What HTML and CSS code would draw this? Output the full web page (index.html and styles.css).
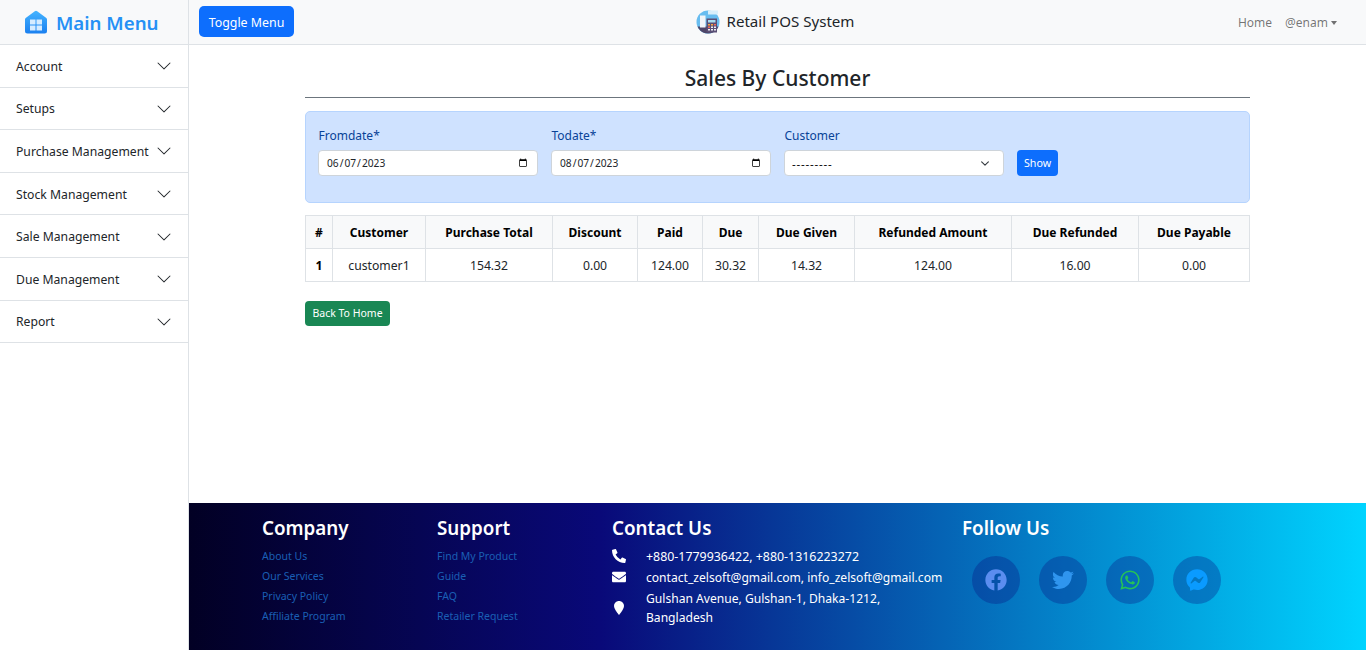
FILE: index.html
```html
<!DOCTYPE html>
<html>
<head>
    <title>Retail POS System</title>
    <meta http-equiv="content-type" content="text/html; charset=UTF-8"/>
    <link rel="stylesheet" href="styles.css">
</head>
<body>
<div class="shell">
    <aside class="sidebar">
        <div class="brand">
            <svg class="brand-icon" viewBox="0 0 24 24">
                <defs>
                    <linearGradient id="houseFill" x1="0" y1="0" x2="0" y2="1">
                        <stop offset="0" stop-color="#45b4ff"/>
                        <stop offset="1" stop-color="#1a80f0"/>
                    </linearGradient>
                </defs>
                <path fill="url(#houseFill)" d="M10.800 1.200a2 2 0 0 1 2.400 0l8.800 6.600a2 2 0 0 1 1 1.700V21a2.500 2.500 0 0 1-2.500 2.500H3.500A2.500 2.500 0 0 1 1 21V9.500a2 2 0 0 1 1-1.700z"/>
                <path fill="#d6ecff" d="M6 9.500h5.500v5H6zM12.500 9.500H18v5h-5.500zM6 15.500h5.500v5H6zM12.500 15.500H18v5h-5.500z"/>
            </svg>
            <span>Main Menu</span>
        </div>
        <ul class="menu">
            <li><span>Account</span><svg viewBox="0 0 16 16"><path d="M1.646 4.646a.5.5 0 0 1 .708 0L8 10.293l5.646-5.647a.5.5 0 0 1 .708.708l-6 6a.5.5 0 0 1-.708 0l-6-6a.5.5 0 0 1 0-.708z"/></svg></li>
            <li><span>Setups</span><svg viewBox="0 0 16 16"><path d="M1.646 4.646a.5.5 0 0 1 .708 0L8 10.293l5.646-5.647a.5.5 0 0 1 .708.708l-6 6a.5.5 0 0 1-.708 0l-6-6a.5.5 0 0 1 0-.708z"/></svg></li>
            <li><span>Purchase Management</span><svg viewBox="0 0 16 16"><path d="M1.646 4.646a.5.5 0 0 1 .708 0L8 10.293l5.646-5.647a.5.5 0 0 1 .708.708l-6 6a.5.5 0 0 1-.708 0l-6-6a.5.5 0 0 1 0-.708z"/></svg></li>
            <li><span>Stock Management</span><svg viewBox="0 0 16 16"><path d="M1.646 4.646a.5.5 0 0 1 .708 0L8 10.293l5.646-5.647a.5.5 0 0 1 .708.708l-6 6a.5.5 0 0 1-.708 0l-6-6a.5.5 0 0 1 0-.708z"/></svg></li>
            <li><span>Sale Management</span><svg viewBox="0 0 16 16"><path d="M1.646 4.646a.5.5 0 0 1 .708 0L8 10.293l5.646-5.647a.5.5 0 0 1 .708.708l-6 6a.5.5 0 0 1-.708 0l-6-6a.5.5 0 0 1 0-.708z"/></svg></li>
            <li><span>Due Management</span><svg viewBox="0 0 16 16"><path d="M1.646 4.646a.5.5 0 0 1 .708 0L8 10.293l5.646-5.647a.5.5 0 0 1 .708.708l-6 6a.5.5 0 0 1-.708 0l-6-6a.5.5 0 0 1 0-.708z"/></svg></li>
            <li><span>Report</span><svg viewBox="0 0 16 16"><path d="M1.646 4.646a.5.5 0 0 1 .708 0L8 10.293l5.646-5.647a.5.5 0 0 1 .708.708l-6 6a.5.5 0 0 1-.708 0l-6-6a.5.5 0 0 1 0-.708z"/></svg></li>
        </ul>
    </aside>

    <div class="main">
        <nav class="topbar">
            <button class="btn btn-toggle">Toggle Menu</button>
            <div class="app-title">
                <svg class="app-logo" viewBox="0 0 24 24">
                    <circle cx="12" cy="12" r="11.500" fill="#68bdf0"/>
                    <path fill="#d9effb" d="M12 .5h10v4H12z"/>
                    <path fill="#4e4668" d="M1.500 16.500h21a11.500 11.500 0 0 1-2.500 3.700A11.500 11.500 0 0 1 4 20.200a11.500 11.500 0 0 1-2.500-3.700z"/>
                    <path fill="#f2f5f8" d="M4 5.500h5.500v12H4z"/>
                    <path fill="#5a4f75" d="M10.500 8.500H21v14h-9a3 3 0 0 1-1.500-1z"/>
                    <path fill="#a8dcef" d="M12 10h7.500v2.500H12z"/>
                    <path fill="#f2a93e" d="M12 14h2v1.500h-2zM15 14h2v1.500h-2z"/>
                    <path fill="#ee6b5c" d="M18 14h2v1.500h-2zM12 16.500h2V18h-2z"/>
                    <path fill="#eef0f2" d="M15 16.500h2V18h-2zM18 16.500h2V18h-2zM12 19h2v1.500h-2zM15 19h2v1.500h-2zM18 19h2v1.500h-2z"/>
                </svg>
                <span>Retail POS System</span>
            </div>
            <div class="top-links">
                <a>Home</a>
                <a class="dropdown">@enam</a>
            </div>
        </nav>

        <main class="content">
            <h3 class="page-title">Sales By Customer</h3>

            <form class="filter-box">
                <label class="field">
                    <span>Fromdate*</span>
                    <input type="date" value="2023-06-07">
                </label>
                <label class="field">
                    <span>Todate*</span>
                    <input type="date" value="2023-08-07">
                </label>
                <label class="field">
                    <span>Customer</span>
                    <select>
                        <option>---------</option>
                    </select>
                </label>
                <button type="button" class="btn btn-show">Show</button>
            </form>

            <table class="report">
                <colgroup>
                    <col class="c-num"><col class="c-name"><col class="c-total"><col class="c-disc"><col class="c-paid"><col class="c-due"><col class="c-given"><col class="c-refund"><col class="c-total"><col class="c-pay">
                </colgroup>
                <thead>
                    <tr>
                        <th>#</th>
                        <th>Customer</th>
                        <th>Purchase Total</th>
                        <th>Discount</th>
                        <th>Paid</th>
                        <th>Due</th>
                        <th>Due Given</th>
                        <th>Refunded Amount</th>
                        <th>Due Refunded</th>
                        <th>Due Payable</th>
                    </tr>
                </thead>
                <tbody>
                    <tr>
                        <th>1</th>
                        <td>customer1</td>
                        <td>154.32</td>
                        <td>0.00</td>
                        <td>124.00</td>
                        <td>30.32</td>
                        <td>14.32</td>
                        <td>124.00</td>
                        <td>16.00</td>
                        <td>0.00</td>
                    </tr>
                </tbody>
            </table>

            <a class="btn btn-back">Back To Home</a>
        </main>

        <footer class="footer">
            <div class="foot-col">
                <h4>Company</h4>
                <a>About Us</a>
                <a>Our Services</a>
                <a>Privacy Policy</a>
                <a>Affiliate Program</a>
            </div>
            <div class="foot-col">
                <h4>Support</h4>
                <a>Find My Product</a>
                <a>Guide</a>
                <a>FAQ</a>
                <a>Retailer Request</a>
            </div>
            <div class="foot-col">
                <h4>Contact Us</h4>
                <div class="contact-row contact-phone">
                    <svg viewBox="0 0 512 512"><path d="M18.900 24.600l104-24a24.200 24.200 0 0 1 27.500 14l48 112a24 24 0 0 1-6.900 28l-60.600 49.600a370.700 370.700 0 0 0 177.200 177.200l49.600-60.600a24 24 0 0 1 28-6.900l112 48a24.300 24.300 0 0 1 14 27.600l-24 104A24 24 0 0 1 464 512C207.900 512 0 304.500 0 48a24 24 0 0 1 18.900-23.400z"/></svg>
                    <span>+880-1779936422, +880-1316223272</span>
                </div>
                <div class="contact-row">
                    <svg viewBox="0 0 512 512"><path d="M502.300 190.800c3.900-3.100 9.700-.2 9.700 4.700V400c0 26.500-21.500 48-48 48H48c-26.500 0-48-21.500-48-48V195.600c0-5 5.700-7.800 9.700-4.700 22.400 17.400 52.100 39.500 154.100 113.600 21.100 15.400 56.700 47.800 92.200 47.600 35.700.3 72-32.800 92.300-47.600 102-74.100 131.600-96.300 154-113.700zM256 320c23.200.4 56.600-29.200 73.400-41.400 132.700-96.300 142.800-104.700 173.400-128.700 5.800-4.500 9.200-11.500 9.200-18.900v-19c0-26.500-21.500-48-48-48H48C21.500 64 0 85.500 0 112v19c0 7.400 3.400 14.300 9.200 18.900 30.600 23.900 40.700 32.400 173.400 128.700 16.800 12.200 50.200 41.800 73.400 41.400z"/></svg>
                    <span>contact_zelsoft@gmail.com, info_zelsoft@gmail.com</span>
                </div>
                <div class="contact-row contact-tall">
                    <svg viewBox="0 0 512 512"><path d="M256 0C155 0 73 82 73 183c0 120 183 329 183 329s183-209 183-329C439 82 357 0 256 0z"/></svg>
                    <span>Gulshan Avenue, Gulshan-1, Dhaka-1212, Bangladesh</span>
                </div>
            </div>
            <div class="foot-col">
                <h4>Follow Us</h4>
                <div class="socials">
                    <a class="social"><svg viewBox="0 0 512 512"><path fill="#5b8def" d="M504 256C504 119 393 8 256 8S8 119 8 256c0 123.780 90.690 226.380 209.250 245V327.690h-63V256h63v-54.640c0-62.150 37-96.480 93.670-96.480 27.140 0 55.520 4.840 55.520 4.840v61h-31.280c-30.800 0-40.410 19.120-40.410 38.730V256h68.780l-11 71.690h-57.780V501C413.310 482.380 504 379.780 504 256z"/></svg></a>
                    <a class="social"><svg viewBox="0 0 512 512"><path fill="#2f95ee" d="M459.370 151.716c.325 4.548.325 9.097.325 13.645 0 138.720-105.583 298.558-298.558 298.558-59.452 0-114.680-17.219-161.137-47.106 8.447.974 16.568 1.299 25.340 1.299 49.055 0 94.213-16.568 130.274-44.832-46.132-.975-84.792-31.188-98.112-72.772 6.498.974 12.995 1.624 19.818 1.624 9.421 0 18.843-1.300 27.614-3.573-48.081-9.747-84.143-51.980-84.143-102.985v-1.299c13.969 7.797 30.214 12.670 47.431 13.319-28.264-18.843-46.781-51.005-46.781-87.391 0-19.492 5.197-37.360 14.294-52.954 51.655 63.675 129.300 105.258 216.365 109.807-1.624-7.797-2.599-15.918-2.599-24.040 0-57.828 46.782-104.934 104.934-104.934 30.213 0 57.502 12.670 76.670 33.137 23.715-4.548 46.456-13.320 66.599-25.340-7.798 24.366-24.366 44.833-46.132 57.827 21.117-2.273 41.584-8.122 60.426-16.243-14.292 20.791-32.161 39.308-52.628 54.253z"/></svg></a>
                    <a class="social"><svg viewBox="0 0 448 512"><path fill="#25c257" d="M380.900 97.100C339 55.100 283.200 32 223.900 32c-122.400 0-222 99.600-222 222 0 39.100 10.200 77.300 29.600 111L0 480l117.700-30.900c32.400 17.700 68.900 27 106.100 27h.1c122.300 0 224.100-99.600 224.100-222 0-59.300-25.200-115-67.100-157zm-157 341.600c-33.200 0-65.700-8.900-94-25.700l-6.700-4-69.800 18.300L72 359.200l-4.400-7c-18.500-29.400-28.200-63.300-28.200-98.200 0-101.700 82.800-184.500 184.600-184.500 49.300 0 95.600 19.200 130.400 54.100 34.800 34.900 56.200 81.200 56.100 130.500 0 101.800-84.900 184.600-186.600 184.600zm101.200-138.200c-5.500-2.800-32.800-16.200-37.900-18-5.100-1.900-8.800-2.800-12.500 2.800-3.700 5.600-14.300 18-17.600 21.800-3.200 3.700-6.500 4.200-12 1.400-32.600-16.300-54-29.100-75.500-66-5.700-9.800 5.700-9.100 16.300-30.300 1.800-3.700.9-6.900-.5-9.700-1.400-2.800-12.500-30.100-17.100-41.200-4.500-10.800-9.100-9.300-12.500-9.500-3.200-.2-6.900-.2-10.600-.2-3.700 0-9.700 1.400-14.800 6.900-5.100 5.600-19.400 19-19.400 46.300 0 27.300 19.900 53.700 22.600 57.400 2.800 3.700 39.100 59.700 94.800 83.800 35.200 15.200 49 16.500 66.600 13.900 10.700-1.600 32.800-13.400 37.400-26.400 4.600-13 4.600-24.100 3.200-26.400-1.300-2.500-5-3.900-10.500-6.600z"/></svg></a>
                    <a class="social"><svg viewBox="0 0 512 512"><path fill="#0a9bff" d="M256.550 8C116.520 8 8 110.340 8 248.570c0 72.300 29.710 134.780 78.070 177.940 8.350 7.510 6.630 11.860 8.050 58.230A19.920 19.920 0 0 0 122 502.310c52.910-23.300 53.590-25.140 62.560-22.700C337.850 521.800 504 423.700 504 248.570 504 110.340 396.590 8 256.550 8zm149.240 185.130l-73 115.570a37.370 37.370 0 0 1-53.910 9.930l-58.080-43.470a15 15 0 0 0-18 0l-78.370 59.440c-10.460 7.930-24.160-4.600-17.110-15.670l73-115.570a37.360 37.360 0 0 1 53.910-9.930l58.060 43.460a15 15 0 0 0 18 0l78.410-59.380c10.440-7.980 24.140 4.540 17.090 15.620z"/></svg></a>
                </div>
            </div>
        </footer>
    </div>
</div>
</body>
</html>
```

FILE: styles.css
```css
* {
    box-sizing: border-box;
}

html, body {
    height: 100%;
}

body {
    margin: 0;
    font-family: "Noto Sans", "Open Sans", sans-serif;
    font-size: 12.2px;
    color: #212529;
    background-color: #fff;
    overflow: hidden;
}

.shell {
    display: flex;
    height: 100vh;
}

/* sidebar */
.sidebar {
    width: 189px;
    flex-shrink: 0;
    border-right: 1px solid #dee2e6;
}

.brand {
    display: flex;
    align-items: center;
    gap: 8px;
    height: 45px;
    padding-left: 24px;
    background-color: #f8f9fa;
    border-bottom: 1px solid #dee2e6;
    color: #2590f5;
    font-size: 18.7px;
    font-weight: 600;
}

.brand-icon {
    width: 24px;
    height: 24px;
}

.menu {
    list-style: none;
    margin: 0;
    padding: 0;
}

.menu li {
    display: flex;
    align-items: center;
    justify-content: space-between;
    height: 42.6px;
    padding: 1px 16px 0;
    border-bottom: 1px solid #dee2e6;
    white-space: nowrap;
}

.menu li svg {
    width: 16px;
    height: 16px;
    fill: #212529;
}

/* main column */
.main {
    flex: 1;
    min-width: 0;
    display: flex;
    flex-direction: column;
}

.topbar {
    display: grid;
    grid-template-columns: 1fr auto 1fr;
    align-items: center;
    height: 45px;
    padding: 0 15px 0 10px;
    background-color: #f8f9fa;
    border-bottom: 1px solid #dee2e6;
}

.btn {
    display: inline-block;
    border: 1px solid transparent;
    border-radius: 4px;
    color: #fff;
    font-family: inherit;
    text-align: center;
}

.btn-toggle {
    justify-self: start;
    width: 95px;
    height: 31px;
    padding: 1px 0 0;
    margin-top: -1px;
    border-radius: 5px;
    background-color: #0d6efd;
    font-size: 12.4px;
}

.app-title {
    display: flex;
    align-items: center;
    gap: 7px;
    font-size: 15.1px;
}

.app-title span {
    padding-bottom: 2px;
}

.app-logo {
    width: 24px;
    height: 24px;
}

.top-links {
    justify-self: end;
    display: flex;
    gap: 13px;
    margin-right: 14px;
    font-size: 12px;
    color: rgba(0, 0, 0, .55);
}

.dropdown::after {
    content: "";
    display: inline-block;
    margin-left: 3px;
    vertical-align: 2px;
    border-top: 4px solid;
    border-left: 3.5px solid transparent;
    border-right: 3.5px solid transparent;
}

.content {
    flex: 1;
    min-height: 0;
    padding: 0 116px;
}

.page-title {
    margin: 0 0 13px;
    padding: 17px 0 3px;
    text-align: center;
    font-size: 21px;
    font-weight: 500;
    line-height: 32px;
    border-bottom: 1px solid #6c757d;
}

/* filter form */
.filter-box {
    display: flex;
    align-items: flex-start;
    gap: 13px;
    height: 92px;
    padding: 13px 12px;
    margin-bottom: 12px;
    background-color: #cfe2ff;
    border: 1px solid #b6d4fe;
    border-radius: 5px;
    color: #084298;
}

.field {
    display: flex;
    flex-direction: column;
    gap: 4px;
    width: 220px;
    font-size: 12px;
}

.field span {
    line-height: 21px;
    padding-left: .5px;
}

.field input,
.field select {
    width: 100%;
    height: 26px;
    padding: 0 7px;
    background-color: #fff;
    border: 1px solid #ced4da;
    border-radius: 4px;
    color: #212529;
    font-family: inherit;
    font-size: 10.2px;
}

.field select {
    appearance: none;
    font-size: 11.5px;
    letter-spacing: .8px;
    color: #000;
    background-image: url("data:image/svg+xml,%3csvg xmlns='http://www.w3.org/2000/svg' viewBox='0 0 16 16'%3e%3cpath fill='none' stroke='%23343a40' stroke-linecap='round' stroke-linejoin='round' stroke-width='2' d='M2 5l6 6 6-6'/%3e%3c/svg%3e");
    background-repeat: no-repeat;
    background-position: right 12px center;
    background-size: 12px 9px;
}

.btn-show {
    width: 41px;
    height: 26px;
    padding: 0;
    margin-top: 25px;
    background-color: #0d6efd;
    font-size: 10.7px;
}

/* report table */
.report {
    width: calc(100% - 1px);
    table-layout: fixed;
    border-collapse: collapse;
    margin-bottom: 19px;
    font-size: 12.2px;
}

.report th,
.report td {
    height: 33px;
    padding: 0;
    text-align: center;
    border: 1px solid #dee2e6;
}

.report th {
    color: #000;
    font-weight: 700;
}

.report thead th {
    background-color: #f8f9fa;
    font-size: 12px;
}

.c-num { width: 27px; }
.c-name { width: 93px; }
.c-total { width: 127px; }
.c-disc { width: 85px; }
.c-paid { width: 65px; }
.c-due { width: 56px; }
.c-given { width: 96px; }
.c-refund { width: 157px; }
.c-pay { width: 111px; }

.btn-back {
    width: 85px;
    height: 25px;
    line-height: 23px;
    background-color: #198754;
    font-size: 10.5px;
}

/* footer */
.footer {
    display: grid;
    grid-template-columns: 175px 175px 350px 1fr;
    height: 147px;
    padding: 13px 0 0 73px;
    background: linear-gradient(90deg, #020024 0%, #090979 35%, #00d4ff 100%);
    color: #fff;
}

.foot-col h4 {
    margin: 0 0 6px;
    font-size: 18.8px;
    font-weight: 600;
    line-height: 24px;
}

.foot-col > a {
    display: block;
    height: 20px;
    line-height: 20px;
    font-size: 10.5px;
    color: #1a5fb4;
}

.contact-row {
    display: flex;
    align-items: center;
    gap: 20px;
    min-height: 20px;
    font-size: 12.1px;
    line-height: 19px;
    white-space: nowrap;
}

.contact-row + .contact-row {
    margin-top: 1px;
}

.contact-phone {
    font-size: 12.4px;
}

.contact-row svg {
    width: 14px;
    height: 14px;
    flex-shrink: 0;
    fill: #fff;
}

.contact-row.contact-tall {
    width: 290px;
    margin-top: 2px;
    white-space: normal;
}

.socials {
    display: flex;
    gap: 19px;
    padding: 10px 0 0 10px;
}

.social {
    display: flex;
    align-items: center;
    justify-content: center;
    width: 48px;
    height: 48px;
    border-radius: 50%;
    background-color: rgba(9, 9, 121, .3);
}

.social svg {
    width: 22px;
    height: 22px;
}
```
